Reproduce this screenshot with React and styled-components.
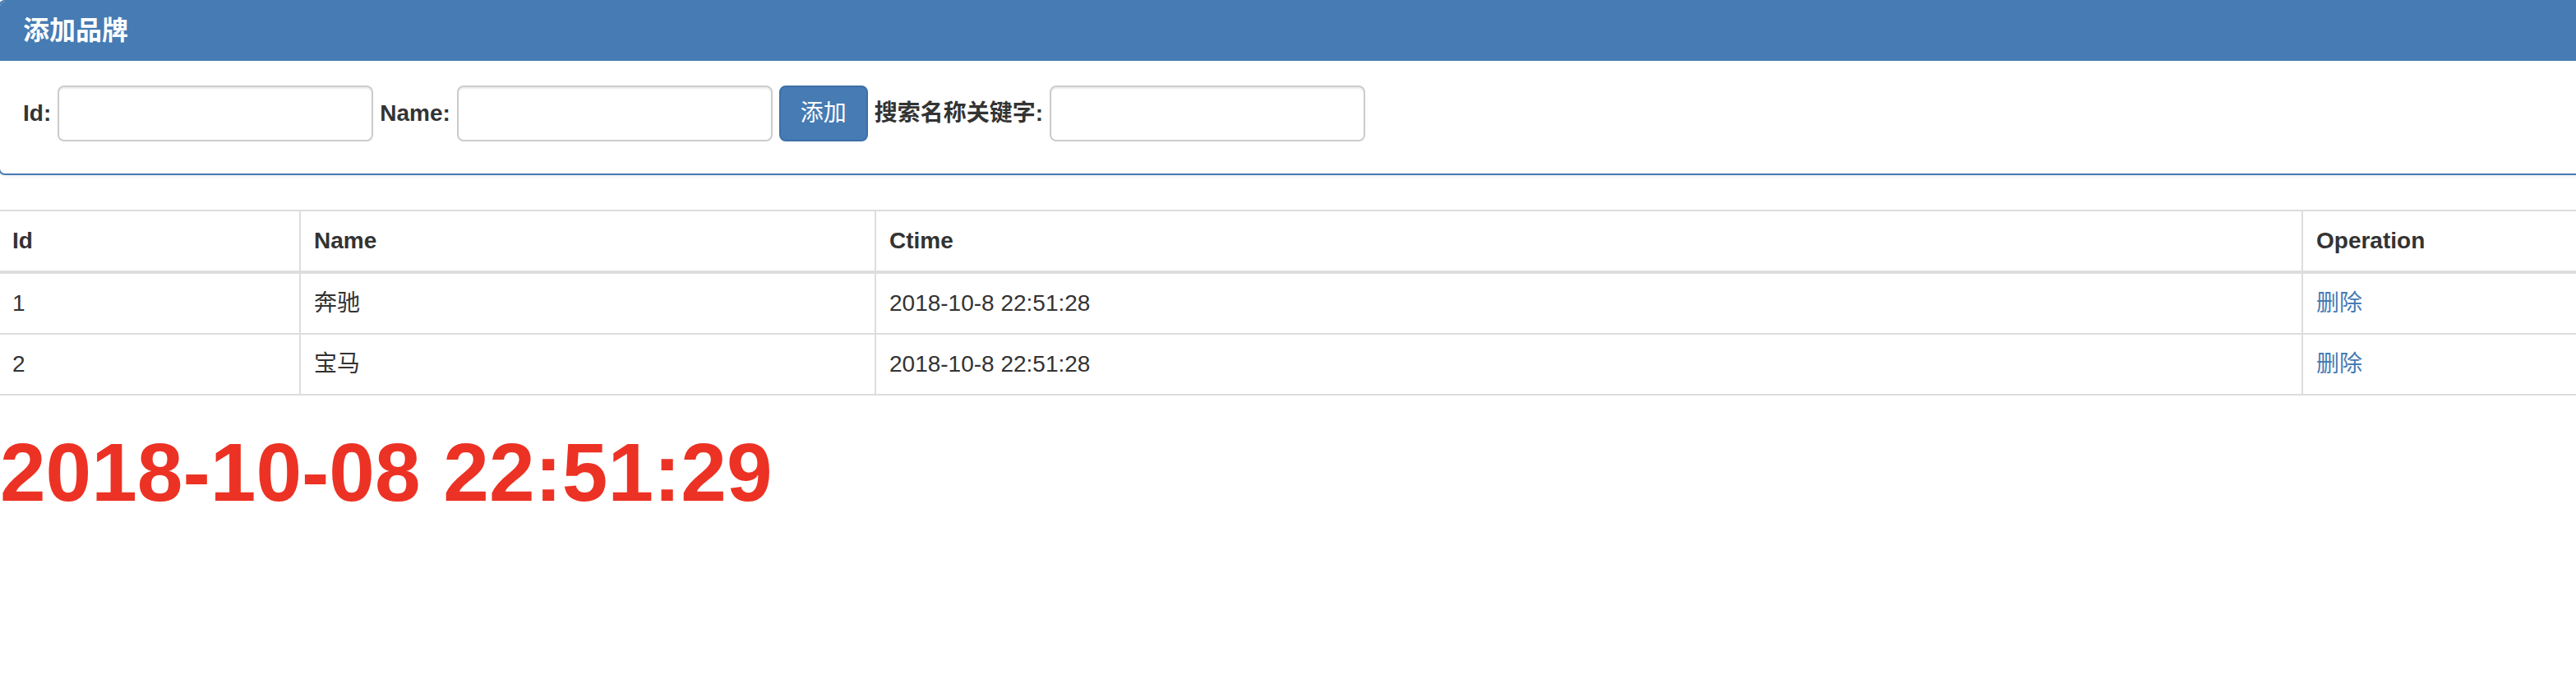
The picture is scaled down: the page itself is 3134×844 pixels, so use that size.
import React from 'react';
import styled, { createGlobalStyle } from 'styled-components';

const GlobalStyle = createGlobalStyle`
html, body {
    margin:0;
    padding:0;
    background:#fff;
    overflow:hidden;
}
body{
    font-family:"Liberation Sans", "Noto Sans CJK SC", sans-serif;
    font-size:28px;
    line-height:40px;
    color:#333;
}
`

const brands = [
    { id: 1, name: '奔驰', ctime: '2018-10-8 22:51:28' },
    { id: 2, name: '宝马', ctime: '2018-10-8 22:51:28' },
];

export default function App() {

    return (
        <React.Fragment>
            <GlobalStyle />
            <Page>
                <Panel>
                    <PanelHeading>
                        <PanelTitle>添加品牌</PanelTitle>
                    </PanelHeading>
                    <PanelBody>
                        <FormRow>
                            <Label>Id:</Label>
                            <Input type="text" />
                            <Label>Name:</Label>
                            <Input type="text" />
                            <AddButton type="button">添加</AddButton>
                            <Label>搜索名称关键字:</Label>
                            <Input type="text" />
                        </FormRow>
                    </PanelBody>
                </Panel>

                <Table>
                    <colgroup>
                        <col width="367" />
                        <col width="700" />
                        <col width="1736" />
                        <col />
                    </colgroup>
                    <thead>
                        <tr>
                            <Th>Id</Th>
                            <Th>Name</Th>
                            <Th>Ctime</Th>
                            <Th>Operation</Th>
                        </tr>
                    </thead>
                    <tbody>
                        {brands.map(item => (
                            <tr key={item.id}>
                                <Td>{item.id}</Td>
                                <Td>{item.name}</Td>
                                <Td>{item.ctime}</Td>
                                <Td><DeleteLink href="#">删除</DeleteLink></Td>
                            </tr>
                        ))}
                    </tbody>
                </Table>

                <Clock>2018-10-08 22:51:29</Clock>
            </Page>
        </React.Fragment>
    )
}

const Page = styled.div `
width:3160px;
margin-left:-2px;
`

const Panel = styled.div `
background:#fff;
border:2px solid #467bb3;
border-radius:8px;
box-shadow:0 2px 4px rgba(0,0,0,.06);
margin-bottom:42px;
`

const PanelHeading = styled.div `
height:72px;
padding:0 28px;
display:flex;
align-items:center;
background:#467bb3;
color:#fff;
border-top-left-radius:6px;
border-top-right-radius:6px;
`

const PanelTitle = styled.h3 `
margin:0;
font-size:32px;
font-weight:bold;
line-height:1.1;
`

const PanelBody = styled.div `
padding:30px 28px 39px;
`

const FormRow = styled.div `
display:flex;
align-items:center;
gap:8px;
`

const Label = styled.label `
font-weight:bold;
`

const Input = styled.input `
box-sizing:border-box;
width:384px;
height:68px;
padding:12px 24px;
font-size:28px;
color:#555;
background:#fff;
border:2px solid #ccc;
border-radius:8px;
box-shadow:inset 0 2px 2px rgba(0,0,0,.075);
outline:none;
`

const AddButton = styled.button `
box-sizing:border-box;
height:68px;
padding:12px 24px;
font-family:"Liberation Sans", "Noto Sans CJK SC", sans-serif;
font-size:28px;
line-height:40px;
color:#fff;
background:#467bb3;
border:2px solid #3d6fa6;
border-radius:8px;
cursor:pointer;
`

const Table = styled.table `
width:3163px;
margin-left:-1px;
table-layout:fixed;
border-collapse:collapse;
border-spacing:0;
border:2px solid #ddd;
`

const Th = styled.th `
padding:16px;
text-align:left;
font-weight:bold;
border:2px solid #ddd;
border-bottom-width:4px;
`

const Td = styled.td `
padding:16px;
border:2px solid #ddd;
`

const DeleteLink = styled.a `
color:#467bb3;
text-decoration:none;
`

const Clock = styled.h1 `
margin:38px 0 0 2px;
font-size:100px;
line-height:1.1;
font-weight:bold;
color:#ec3224;
`
